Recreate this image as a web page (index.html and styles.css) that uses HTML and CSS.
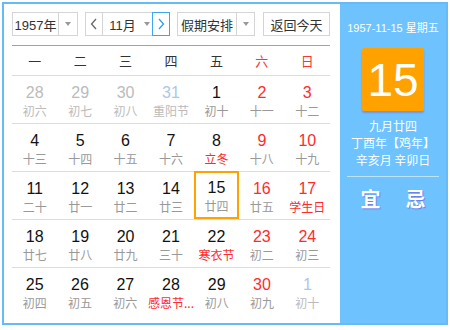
FILE: index.html
```html
<!DOCTYPE html>
<html lang="zh-CN">
<head>
<meta charset="utf-8">
<link rel="stylesheet" href="styles.css">
</head>
<body>
<div class="cal">
  <div class="main">
    <div class="toolbar">
      <div class="sel sel-year"><span class="sel-text">1957年</span><span class="sel-arrow"><i class="tri"></i></span></div>
      <div class="month-group">
        <span class="nav nav-prev"><svg width="8" height="12" viewBox="0 0 8 12"><path d="M6 1 L1.5 6 L6 11" fill="none" stroke="#666" stroke-width="1.3"/></svg></span>
        <span class="month"><span class="sel-text">11月</span><i class="tri"></i></span>
        <span class="nav nav-next"><svg width="8" height="12" viewBox="0 0 8 12"><path d="M2 1 L6.5 6 L2 11" fill="none" stroke="#2e9df0" stroke-width="1.3"/></svg></span>
      </div>
      <div class="sel sel-hol"><span class="sel-text">假期安排</span><span class="sel-arrow"><i class="tri"></i></span></div>
      <div class="btn-today">返回今天</div>
    </div>
    <div class="grid head">
      <div class="wk">一</div><div class="wk">二</div><div class="wk">三</div><div class="wk">四</div><div class="wk">五</div><div class="wk red">六</div><div class="wk red">日</div>
    </div>
    <div class="grid row">
      <div class="day other"><b>28</b><span>初六</span></div>
      <div class="day other"><b>29</b><span>初七</span></div>
      <div class="day other"><b>30</b><span>初八</span></div>
      <div class="day other blue"><b>31</b><span>重阳节</span></div>
      <div class="day"><b>1</b><span>初十</span></div>
      <div class="day we"><b>2</b><span>十一</span></div>
      <div class="day we"><b>3</b><span>十二</span></div>
    </div>
    <div class="grid row">
      <div class="day"><b>4</b><span>十三</span></div>
      <div class="day"><b>5</b><span>十四</span></div>
      <div class="day"><b>6</b><span>十五</span></div>
      <div class="day"><b>7</b><span>十六</span></div>
      <div class="day"><b>8</b><span class="fest">立冬</span></div>
      <div class="day we"><b>9</b><span>十八</span></div>
      <div class="day we"><b>10</b><span>十九</span></div>
    </div>
    <div class="grid row">
      <div class="day"><b>11</b><span>二十</span></div>
      <div class="day"><b>12</b><span>廿一</span></div>
      <div class="day"><b>13</b><span>廿二</span></div>
      <div class="day"><b>14</b><span>廿三</span></div>
      <div class="day cur"><b>15</b><span>廿四</span></div>
      <div class="day we"><b>16</b><span>廿五</span></div>
      <div class="day we"><b>17</b><span class="fest">学生日</span></div>
    </div>
    <div class="grid row">
      <div class="day"><b>18</b><span>廿七</span></div>
      <div class="day"><b>19</b><span>廿八</span></div>
      <div class="day"><b>20</b><span>廿九</span></div>
      <div class="day"><b>21</b><span>三十</span></div>
      <div class="day"><b>22</b><span class="fest">寒衣节</span></div>
      <div class="day we"><b>23</b><span>初二</span></div>
      <div class="day we"><b>24</b><span>初三</span></div>
    </div>
    <div class="grid row last">
      <div class="day"><b>25</b><span>初四</span></div>
      <div class="day"><b>26</b><span>初五</span></div>
      <div class="day"><b>27</b><span>初六</span></div>
      <div class="day"><b>28</b><span class="fest">感恩节...</span></div>
      <div class="day"><b>29</b><span>初八</span></div>
      <div class="day we"><b>30</b><span>初九</span></div>
      <div class="day other blue"><b>1</b><span>初十</span></div>
    </div>
  </div>
  <div class="side">
    <div class="side-date">1957-11-15 星期五</div>
    <div class="big">15</div>
    <div class="lunar">
      <div>九月廿四</div>
      <div>丁酉年【鸡年】</div>
      <div>辛亥月 辛卯日</div>
    </div>
    <div class="sep"></div>
    <div class="yiji"><span>宜</span><span>忌</span></div>
  </div>
</div>
</body>
</html>
```

FILE: styles.css
```css
html, body { margin: 0; padding: 0; background: #fff; }
body { font-family: "Liberation Sans", Arial, "Noto Sans CJK SC", sans-serif; }
.cal {
  margin: 2px;
  width: 442px;
  height: 319px;
  border: 2px solid #66bbf7;
  display: flex;
}
.main {
  width: 318px;
  padding: 8px 10px 0 8px;
}
.toolbar {
  display: flex;
  gap: 7px;
  height: 24px;
  padding-bottom: 9px;
  border-bottom: 1px solid #5db5f5;
}
.toolbar > * { box-sizing: border-box; height: 24px; }
.sel {
  display: flex;
  border: 1px solid #d5d5d5;
  font-size: 13px;
  color: #333;
}
.sel-text { display: flex; align-items: center; justify-content: center; }
.sel-year { width: 66px; }
.sel-year .sel-text { width: 45px; }
.sel-hol { width: 78px; }
.sel-hol .sel-text { width: 58px; }
.sel-arrow {
  flex: 1;
  border-left: 1px solid #d5d5d5;
  display: flex; align-items: center; justify-content: center;
}
.tri {
  display: inline-block;
  width: 0; height: 0;
  border-left: 3.5px solid transparent;
  border-right: 3.5px solid transparent;
  border-top: 4px solid #999;
}
.month-group { display: flex; width: 85px; }
.nav {
  box-sizing: border-box;
  width: 18px; height: 24px;
  display: flex; align-items: center; justify-content: center;
  border: 1px solid #d5d5d5;
}
.nav-next { border-color: #3ea5f2; }
.month {
  flex: 1;
  box-sizing: border-box;
  height: 24px;
  border-top: 1px solid #d5d5d5;
  border-bottom: 1px solid #d5d5d5;
  display: flex; align-items: center; justify-content: center; gap: 8px;
  font-size: 13px; color: #333;
  padding-left: 4px;
}
.btn-today {
  width: 67px;
  margin-left: 1px;
  border: 1px solid #d5d5d5;
  font-size: 13px; color: #333;
  display: flex; align-items: center; justify-content: center;
}
.grid { display: grid; grid-template-columns: repeat(7, 1fr); }
.head { height: 29px; border-bottom: 1px solid #dcdcdc; }
.wk {
  display: flex; align-items: center; justify-content: center;
  font-size: 13px; color: #333;
  font-family: "Noto Sans CJK SC", sans-serif;
}
.red { color: #ff3333; }
.row { height: 47px; border-bottom: 1px solid #dcdcdc; }
.row.last { border-bottom: none; }
.day {
  box-sizing: border-box;
  display: flex; flex-direction: column; align-items: center;
  padding-top: 8px;
}
.day b {
  font-weight: normal;
  font-size: 16px;
  line-height: 18px;
  color: #111;
}
.day span {
  font-size: 12px;
  line-height: 16px;
  margin-top: 1px;
  color: #999;
  font-family: "Noto Sans CJK SC", sans-serif;
  white-space: nowrap;
}
.day.we b { color: #ff2b2b; }
.day.other b { color: #bbb; }
.day.other span { color: #bbb; }
.day.other.blue b { color: #a9c8ea; }
.day span.fest { color: #ff2b2b; }
.day.cur {
  border: 2px solid #ffa200;
  padding-top: 6px;
  margin-top: -1px;
  height: 48px;
}
.day.cur span { margin-top: 1px; }
.side {
  width: 106px;
  background: #6ec3ff;
  color: #fff;
  display: flex; flex-direction: column; align-items: center;
  font-family: "Noto Sans CJK SC", sans-serif;
}
.side-date {
  margin-top: 16px;
  font-size: 11px;
  line-height: 16px;
  font-family: "Liberation Sans", "Noto Sans CJK SC", sans-serif;
}
.big {
  margin-top: 12px;
  width: 62px; height: 63px;
  background: #ffa200;
  border-radius: 2px;
  box-shadow: 0 2px 2px rgba(110, 90, 200, 0.45);
  display: flex; align-items: center; justify-content: center;
  font-family: "Liberation Sans", sans-serif;
  font-size: 46px;
  color: #fff;
}
.lunar {
  margin-top: 6px;
  font-size: 12px;
  line-height: 17px;
  text-align: center;
}
.sep {
  margin-top: 8px;
  width: 92px;
  height: 1px;
  background: rgba(255, 255, 255, 0.55);
}
.yiji {
  margin-top: 10px;
  display: flex;
  gap: 25px;
  font-size: 20px;
  font-weight: bold;
  line-height: 24px;
  text-shadow: 1px 1px 1px rgba(100, 80, 220, 0.6);
}
```
